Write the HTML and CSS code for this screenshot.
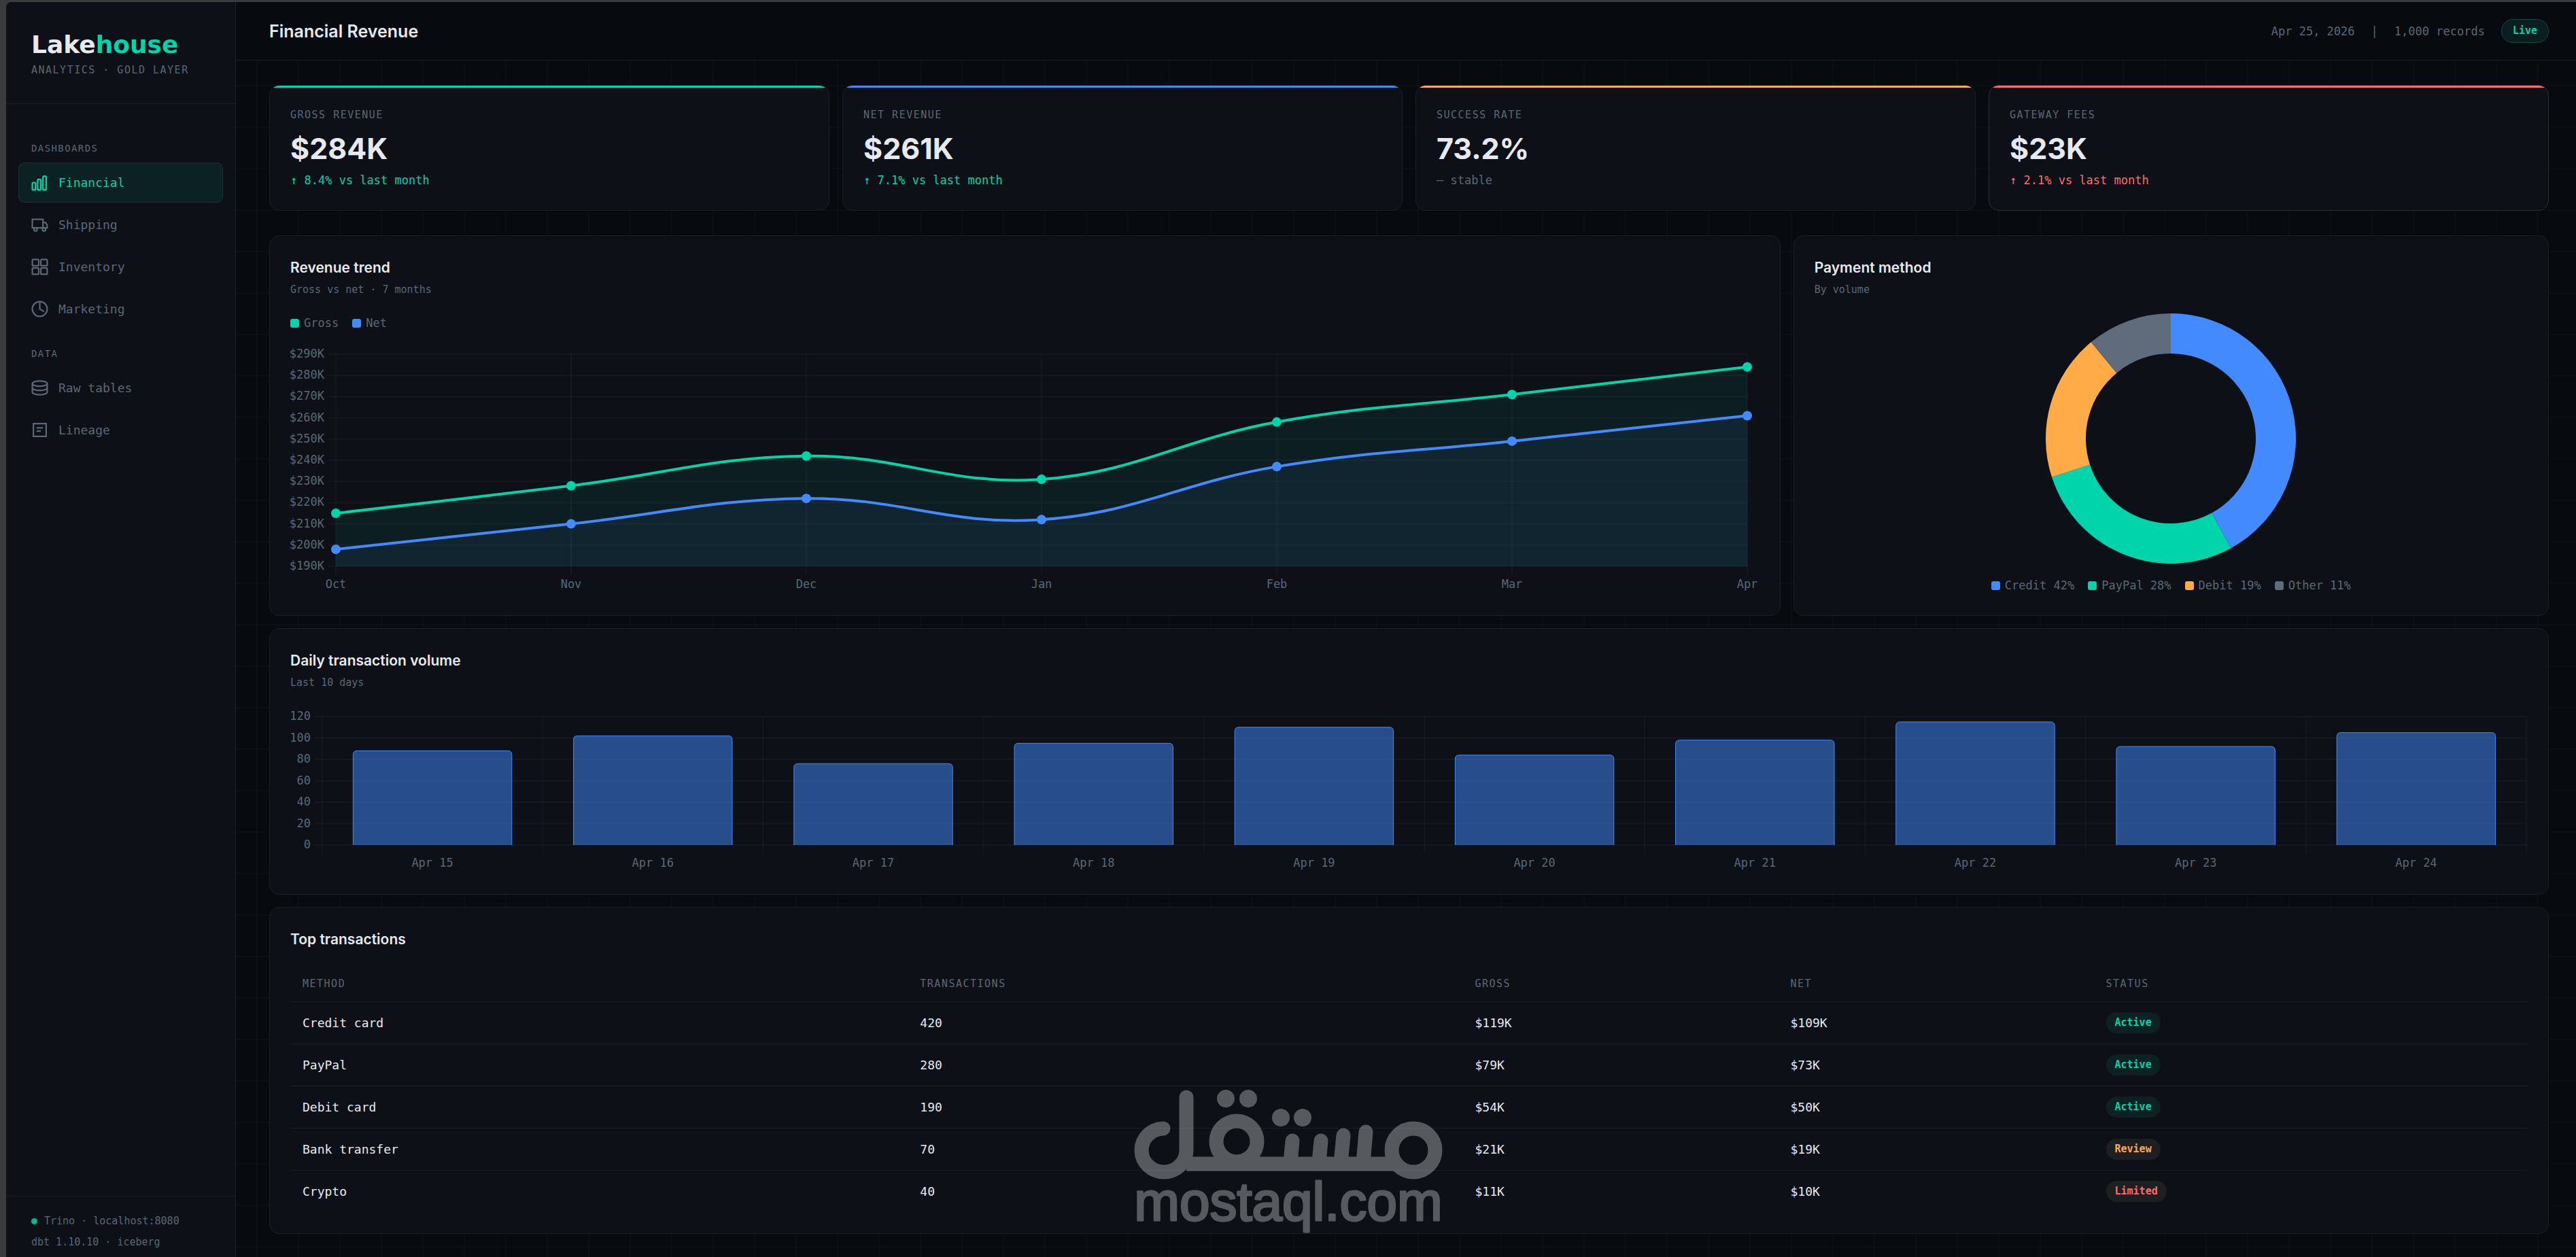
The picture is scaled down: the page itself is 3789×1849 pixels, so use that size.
FILE: index.html
```
<!DOCTYPE html>
<html lang="en">
<head>
    <meta charset="utf-8">
    <title>Lakehouse - Financial Revenue</title>
    <link rel="stylesheet" href="styles.css">
</head>
<body>

<div class="app">
    <aside class="sidebar">
        <div class="logo">
            <div class="logo-name">Lake<span>house</span></div>
            <div class="logo-sub">ANALYTICS · GOLD LAYER</div>
        </div>

        <nav class="nav">
            <div class="nav-label">DASHBOARDS</div>
            <a href="#financial" class="nav-item active">
                <svg viewBox="0 0 16 16"><rect x="1" y="8" width="3" height="7" rx="1"/><rect x="6" y="5" width="3" height="10" rx="1"/><rect x="11" y="2" width="3" height="13" rx="1"/></svg>
                Financial
            </a>
            <a href="#shipping" class="nav-item">
                <svg viewBox="0 0 16 16"><path d="M1 3h10v8H1zM11 6h2.5L15 8.5V11h-4"/><circle cx="4" cy="12.5" r="1.5"/><circle cx="12" cy="12.5" r="1.5"/></svg>
                Shipping
            </a>
            <a href="#inventory" class="nav-item">
                <svg viewBox="0 0 16 16"><rect x="1" y="1" width="6" height="6" rx="1"/><rect x="9" y="1" width="6" height="6" rx="1"/><rect x="1" y="9" width="6" height="6" rx="1"/><rect x="9" y="9" width="6" height="6" rx="1"/></svg>
                Inventory
            </a>
            <a href="#marketing" class="nav-item">
                <svg viewBox="0 0 16 16"><circle cx="8" cy="8" r="7"/><path d="M8 1v7l4 2.5"/></svg>
                Marketing
            </a>

            <div class="nav-label">DATA</div>
            <a href="#raw" class="nav-item">
                <svg viewBox="0 0 16 16"><ellipse cx="8" cy="4" rx="7" ry="2.5"/><path d="M1 4v4c0 1.4 3.1 2.5 7 2.5s7-1.1 7-2.5V4M1 8v4c0 1.4 3.1 2.5 7 2.5s7-1.1 7-2.5V8"/></svg>
                Raw tables
            </a>
            <a href="#lineage" class="nav-item">
                <svg viewBox="0 0 16 16"><path d="M2 2h12v12H2zM5 6h6M5 9h4"/></svg>
                Lineage
            </a>
        </nav>

        <div class="sidebar-footer">
            <div><span class="dot"></span>Trino · localhost:8080</div>
            <div>dbt 1.10.10 · iceberg</div>
        </div>
    </aside>

    <main class="main">
        <header class="topbar">
            <h1>Financial Revenue</h1>
            <div class="topbar-meta">
                <span>Apr 25, 2026</span>
                <span>|</span>
                <span>1,000 records</span>
                <span class="live">Live</span>
            </div>
        </header>

        <div class="content">
            <section class="kpis">
                <div class="card kpi green">
                    <div class="kpi-label">GROSS REVENUE</div>
                    <div class="kpi-value">$284K</div>
                    <div class="kpi-delta up">↑ 8.4% vs last month</div>
                </div>
                <div class="card kpi blue">
                    <div class="kpi-label">NET REVENUE</div>
                    <div class="kpi-value">$261K</div>
                    <div class="kpi-delta up">↑ 7.1% vs last month</div>
                </div>
                <div class="card kpi orange">
                    <div class="kpi-label">SUCCESS RATE</div>
                    <div class="kpi-value">73.2%</div>
                    <div class="kpi-delta">— stable</div>
                </div>
                <div class="card kpi red">
                    <div class="kpi-label">GATEWAY FEES</div>
                    <div class="kpi-value">$23K</div>
                    <div class="kpi-delta down">↑ 2.1% vs last month</div>
                </div>
            </section>

            <section class="charts">
                <div class="card">
                    <h2>Revenue trend</h2>
                    <p class="sub">Gross vs net · 7 months</p>
                    <div class="legend">
                        <span><i class="bg-green"></i>Gross</span>
                        <span><i class="bg-blue"></i>Net</span>
                    </div>
                    <svg id="trend" class="chart trend"></svg>
                </div>
                <div class="card">
                    <h2>Payment method</h2>
                    <p class="sub">By volume</p>
                    <svg class="donut" viewBox="-184 -184 368 368" id="donut"></svg>
                    <div class="legend center">
                        <span><i class="bg-blue"></i>Credit 42%</span>
                        <span><i class="bg-green"></i>PayPal 28%</span>
                        <span><i class="bg-orange"></i>Debit 19%</span>
                        <span><i class="bg-gray"></i>Other 11%</span>
                    </div>
                </div>
            </section>

            <section class="card">
                <h2>Daily transaction volume</h2>
                <p class="sub">Last 10 days</p>
                <svg id="daily" class="chart daily"></svg>
            </section>

            <section class="card">
                <h2>Top transactions</h2>
                <table>
                    <thead>
                        <tr>
                            <th class="c-method">METHOD</th>
                            <th class="c-count">TRANSACTIONS</th>
                            <th class="c-money">GROSS</th>
                            <th class="c-money">NET</th>
                            <th>STATUS</th>
                        </tr>
                    </thead>
                    <tbody>
                        <tr><td>Credit card</td><td>420</td><td>$119K</td><td>$109K</td><td><span class="pill ok">Active</span></td></tr>
                        <tr><td>PayPal</td><td>280</td><td>$79K</td><td>$73K</td><td><span class="pill ok">Active</span></td></tr>
                        <tr><td>Debit card</td><td>190</td><td>$54K</td><td>$50K</td><td><span class="pill ok">Active</span></td></tr>
                        <tr><td>Bank transfer</td><td>70</td><td>$21K</td><td>$19K</td><td><span class="pill warn">Review</span></td></tr>
                        <tr><td>Crypto</td><td>40</td><td>$11K</td><td>$10K</td><td><span class="pill bad">Limited</span></td></tr>
                    </tbody>
                </table>
            </section>
        </div>
    </main>
</div>

<svg class="watermark" viewBox="0 0 454 214">
    <g class="mark">
        <path d="M43 57A33 32 0 1 0 77 89V11"/>
        <path d="M77 109H390" stroke-linecap="butt"/>
        <circle cx="151" cy="76" r="30"/>
        <path d="M233 75l-3 33M275 75l-3 33M308 67l-4 41M341 62l-4 46"/>
        <circle cx="411" cy="89" r="32"/>
    </g>
    <g>
        <circle cx="135" cy="13" r="13"/>
        <circle cx="168" cy="13" r="13"/>
        <circle cx="216" cy="41" r="13"/>
        <circle cx="248" cy="41" r="13"/>
    </g>
    <text x="227" y="192" text-anchor="middle">mostaql.com</text>
</svg>

<script src="charts.js"></script>
</body>
</html>
```

FILE: styles.css
```
:root {
    --bg: #070a0e;
    --surface: #0d1117;
    --line: #1b1f24;
    --text: #e6e9f0;
    --muted: #5a6775;
    --green: #00d4aa;
    --blue: #448aff;
    --orange: #ffab47;
    --red: #ff6b6b;
    --gray: #5e6c7b;
    --mono: "DejaVu Sans Mono", monospace;
    --display: Inter, sans-serif;
}

* {
    box-sizing: border-box;
}

body {
    margin: 0;
    padding: 3px 0 0 9px;
    background: #3a3b3e;
    color: var(--text);
    font-family: var(--mono);
    font-size: 17px;
    position: relative;
    overflow: hidden;
}

h1, h2, p {
    margin: 0;
}

.app {
    display: flex;
    min-height: calc(100vh - 3px);
    background: var(--bg);
    border-top-left-radius: 8px;
    overflow: hidden;
}

/* sidebar */

.sidebar {
    flex: 0 0 338px;
    display: flex;
    flex-direction: column;
    background: var(--surface);
    border-right: 1px solid var(--line);
}

.logo {
    height: 150px;
    padding: 43px 37px 0;
    border-bottom: 1px solid var(--line);
}

.logo-name {
    font-family: "DejaVu Sans", sans-serif;
    font-size: 36px;
    font-weight: bold;
    line-height: 40px;
}

.logo-name span {
    color: var(--green);
}

.logo-sub {
    margin-top: 7px;
    font-size: 15px;
    line-height: 20px;
    letter-spacing: .1em;
    color: var(--muted);
}

.nav {
    flex: 1;
    display: flex;
    flex-direction: column;
    gap: 3px;
    padding: 32px 18px 0;
}

.nav-label {
    padding: 23px 19px 8px;
    font-size: 14px;
    line-height: 20px;
    letter-spacing: .1em;
    color: var(--muted);
}

.nav-item {
    display: flex;
    align-items: center;
    gap: 15px;
    height: 59px;
    padding: 0 18px;
    border: 1px solid transparent;
    border-radius: 9px;
    font-size: 18px;
    color: var(--muted);
    text-decoration: none;
}

.nav-item svg {
    width: 25px;
    height: 25px;
    fill: none;
    stroke: currentColor;
    stroke-width: 1.4;
}

.nav-item.active {
    background: #0c2124;
    border-color: #0c3a39;
    color: var(--green);
}

.sidebar-footer {
    padding: 21px 37px 6px;
    border-top: 1px solid var(--line);
    font-size: 15px;
    line-height: 31px;
    color: var(--muted);
}

.dot {
    display: inline-block;
    width: 9px;
    height: 9px;
    margin-right: 10px;
    border-radius: 50%;
    background: #00b894;
}

/* main */

.main {
    flex: 1;
    min-width: 0;
    background-image:
        linear-gradient(rgba(0, 212, 170, .03) 2px, transparent 2px),
        linear-gradient(90deg, rgba(0, 212, 170, .03) 2px, transparent 2px);
    background-size: 61px 61px;
    background-position: 30px 0;
}

.topbar {
    display: flex;
    align-items: center;
    justify-content: space-between;
    height: 86px;
    padding: 0 40px 0 49px;
    background: var(--bg);
    border-bottom: 1px solid var(--line);
}

h1 {
    font-family: var(--display);
    font-size: 25px;
    font-weight: 600;
    line-height: 32px;
}

.topbar-meta {
    display: flex;
    align-items: center;
    gap: 24px;
    color: var(--muted);
}

.live {
    padding: 0 16px;
    border: 1px solid #0c4a45;
    border-radius: 18px;
    background: #0a1d20;
    font-size: 15px;
    font-weight: bold;
    line-height: 33px;
    color: var(--green);
}

.content {
    display: flex;
    flex-direction: column;
    gap: 18px;
    padding: 36px 40px 34px 49px;
}

.card {
    min-width: 0;
    padding: 31px 30px;
    background: var(--surface);
    border: 1px solid var(--line);
    border-radius: 15px;
}

.kpis {
    display: grid;
    grid-template-columns: repeat(4, 1fr);
    gap: 19px;
    margin-bottom: 18px;
}

.kpi {
    position: relative;
    height: 185px;
    overflow: hidden;
}

.kpi::before {
    content: "";
    position: absolute;
    top: 0;
    left: 0;
    right: 0;
    height: 3px;
}

.kpi.green::before, .bg-green { background: var(--green); }
.kpi.blue::before, .bg-blue { background: var(--blue); }
.kpi.orange::before, .bg-orange { background: var(--orange); }
.kpi.red::before { background: var(--red); }
.bg-gray { background: var(--gray); }

.kpi.red {
    border-color: #2b2f34;
}

.kpi-label {
    font-size: 15px;
    line-height: 24px;
    letter-spacing: .1em;
    color: var(--muted);
}

.kpi-value {
    margin: 12px 0 10px;
    font-family: var(--display);
    font-size: 43px;
    font-weight: 700;
    line-height: 50px;
}

.kpi-delta {
    line-height: 24px;
    color: var(--muted);
}

.kpi-delta.up { color: var(--green); }
.kpi-delta.down { color: var(--red); }

.charts {
    display: grid;
    grid-template-columns: 2fr 1fr;
    gap: 19px;
}

h2 {
    font-family: var(--display);
    font-size: 21px;
    font-weight: 600;
    line-height: 32px;
}

.sub {
    margin-top: 4px;
    font-size: 15px;
    line-height: 24px;
    color: var(--muted);
}

.legend {
    display: flex;
    gap: 20px;
    margin-top: 25px;
    line-height: 24px;
    color: var(--muted);
}

.legend span {
    display: flex;
    align-items: center;
    gap: 7px;
}

.legend i {
    width: 13px;
    height: 13px;
    border-radius: 3px;
}

.legend.center {
    justify-content: center;
    margin-top: 20px;
}

.chart {
    display: block;
    width: 100%;
    overflow: visible;
}

.trend {
    height: 368px;
    margin-top: 19px;
}

.daily {
    height: 246px;
    margin-top: 22px;
}

.chart text {
    font-family: var(--mono);
    font-size: 17px;
    fill: var(--muted);
}

.grid {
    stroke: rgba(255, 255, 255, .03);
    stroke-width: 2;
}

.line {
    fill: none;
    stroke-width: 4;
}

.bar {
    fill: rgba(68, 138, 255, .5);
    stroke: var(--blue);
}

.donut {
    display: block;
    width: 368px;
    margin: 23px auto 0;
}

/* table */

table {
    width: 100%;
    margin-top: 24px;
    border-collapse: collapse;
    table-layout: fixed;
}

th, td {
    padding: 0 18px;
    text-align: left;
}

th {
    height: 51px;
    font-size: 15px;
    font-weight: normal;
    letter-spacing: .1em;
    color: var(--muted);
}

td {
    height: 62px;
    border-top: 1px solid var(--line);
    font-size: 18px;
}

.c-method { width: 27.6%; }
.c-count { width: 24.8%; }
.c-money { width: 14.1%; }

.pill {
    display: inline-block;
    padding: 0 13px;
    border-radius: 16px;
    font-size: 15px;
    font-weight: bold;
    line-height: 31px;
}

.pill.ok { background: #0c2124; color: var(--green); }
.pill.warn { background: #1d1f22; color: var(--orange); }
.pill.bad { background: #1d1f23; color: var(--red); }

/* watermark */

.watermark {
    position: absolute;
    left: 50%;
    bottom: 32px;
    width: 454px;
    margin-left: -227px;
    fill: #fff;
    opacity: .3;
    pointer-events: none;
}

.watermark .mark {
    fill: none;
    stroke: #fff;
    stroke-width: 21;
    stroke-linecap: round;
}

.watermark text {
    font-family: "Liberation Sans", sans-serif;
    font-size: 80px;
    stroke: #fff;
    stroke-width: 3;
    stroke-linejoin: round;
}
```

FILE: charts.js
```
var MONTHS = ['Oct', 'Nov', 'Dec', 'Jan', 'Feb', 'Mar', 'Apr'];
var GROSS = [215, 228, 242, 231, 258, 271, 284];
var NET = [198, 210, 222, 212, 237, 249, 261];
var DAILY = [88, 102, 76, 95, 110, 84, 98, 115, 92, 105];
var METHODS = [[42, '#448aff'], [28, '#00d4aa'], [19, '#ffab47'], [11, '#5e6c7b']];

function $(id) {
    return document.getElementById(id);
}

function line(x1, y1, x2, y2) {
    return '<line class="grid" x1="' + x1 + '" y1="' + y1 + '" x2="' + x2 + '" y2="' + y2 + '"/>';
}

function label(x, y, anchor, text) {
    return '<text x="' + x + '" y="' + y + '" text-anchor="' + anchor + '">' + text + '</text>';
}

// smooth curve through all points
function spline(pts) {
    var t = 0.4, out = 'M' + pts[0].join(' '), cps = [];
    pts.forEach(function(p, i) {
        var a = pts[i - 1] || p, b = pts[i + 1] || p;
        var d1 = Math.hypot(p[0] - a[0], p[1] - a[1]);
        var d2 = Math.hypot(b[0] - p[0], b[1] - p[1]);
        var f1 = t * d1 / (d1 + d2), f2 = t * d2 / (d1 + d2);
        cps.push([p[0] - f1 * (b[0] - a[0]), p[1] - f1 * (b[1] - a[1]),
                  p[0] + f2 * (b[0] - a[0]), p[1] + f2 * (b[1] - a[1])]);
    });
    for (var i = 1; i < pts.length; i++)
        out += 'C' + [cps[i - 1][2], cps[i - 1][3], cps[i][0], cps[i][1], pts[i][0], pts[i][1]].join(' ');
    return out;
}

function drawTrend() {
    var w = $('trend').clientWidth, left = 67, right = w - 18, top = 15, bottom = 327;
    var step = (right - left) / 6, html = '';
    function y(v) {
        return bottom - (v - 190) / 100 * (bottom - top);
    }
    for (var v = 190; v <= 290; v += 10)
        html += line(left - 12, y(v), right, y(v)) + label(left - 17, y(v) + 5, 'end', '$' + v + 'K');
    MONTHS.forEach(function(m, i) {
        var x = left + i * step;
        html += line(x, top, x, bottom + 12) + label(x, bottom + 32, 'middle', m);
    });
    [[GROSS, '#00d4aa'], [NET, '#448aff']].forEach(function(s) {
        var pts = s[0].map(function(v, i) { return [left + i * step, y(v)]; });
        var d = spline(pts);
        html += '<path d="' + d + 'V' + bottom + 'H' + left + 'Z" fill="' + s[1] + '" fill-opacity=".07"/>';
        html += '<path class="line" d="' + d + '" stroke="' + s[1] + '"/>';
        pts.forEach(function(p) {
            html += '<circle cx="' + p[0] + '" cy="' + p[1] + '" r="7" fill="' + s[1] + '"/>';
        });
    });
    $('trend').innerHTML = html;
}

function drawDaily() {
    var w = $('daily').clientWidth, left = 47, right = w - 2, top = 16, bottom = 205;
    var step = (right - left) / 10, html = '';
    for (var v = 0; v <= 120; v += 20) {
        var y = bottom - v / 120 * (bottom - top);
        html += line(left - 12, y, right, y) + label(left - 17, y + 5, 'end', v);
    }
    for (var i = 0; i <= 10; i++)
        html += line(left + i * step, top, left + i * step, bottom + 12);
    DAILY.forEach(function(n, i) {
        var x = left + (i + .14) * step, bw = step * .72, y = bottom - n / 120 * (bottom - top);
        html += '<path class="bar" d="M' + x + ' ' + bottom + 'V' + (y + 6) + 'q0 -6 6 -6h' + (bw - 12) + 'q6 0 6 6V' + bottom + '"/>';
        html += label(x + bw / 2, bottom + 32, 'middle', 'Apr ' + (15 + i));
    });
    $('daily').innerHTML = html;
}

function drawDonut() {
    var a = 0, html = '';
    METHODS.forEach(function(m) {
        var b = a + m[0] / 100 * 2 * Math.PI, big = m[0] > 50 ? 1 : 0;
        html += '<path fill="' + m[1] + '" d="M' + 184 * Math.sin(a) + ' ' + -184 * Math.cos(a) +
            'A184 184 0 ' + big + ' 1 ' + 184 * Math.sin(b) + ' ' + -184 * Math.cos(b) +
            'L' + 125 * Math.sin(b) + ' ' + -125 * Math.cos(b) +
            'A125 125 0 ' + big + ' 0 ' + 125 * Math.sin(a) + ' ' + -125 * Math.cos(a) + 'Z"/>';
        a = b;
    });
    $('donut').innerHTML = html;
}

function draw() {
    drawTrend();
    drawDaily();
    drawDonut();
}

window.onresize = draw;
draw();
```
